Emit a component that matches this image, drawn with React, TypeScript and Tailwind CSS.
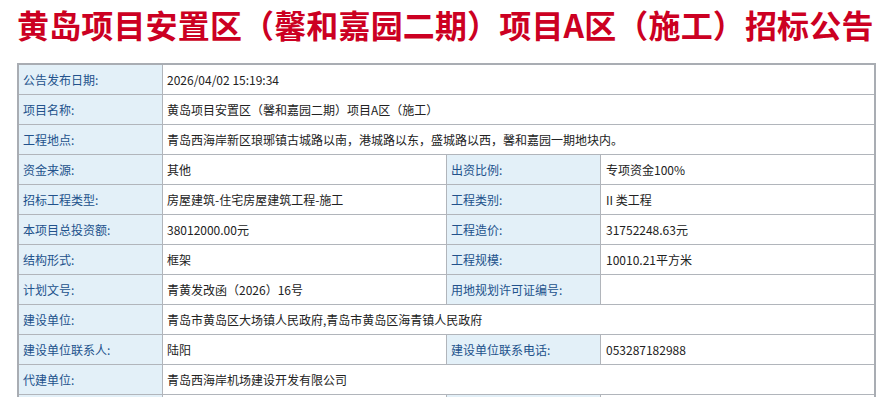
import React from 'react';

const font = { fontFamily: '"Noto Sans CJK SC", "Noto Sans", sans-serif' };

interface Cell {
  label: string;
  value: string;
}

type Row = Cell | [Cell, Cell];

const rows: Row[] = [
  { label: '公告发布日期:', value: '2026/04/02 15:19:34' },
  { label: '项目名称:', value: '黄岛项目安置区（馨和嘉园二期）项目A区（施工）' },
  { label: '工程地点:', value: '青岛西海岸新区琅琊镇古城路以南，港城路以东，盛城路以西，馨和嘉园一期地块内。' },
  [
    { label: '资金来源:', value: '其他' },
    { label: '出资比例:', value: '专项资金100%' },
  ],
  [
    { label: '招标工程类型:', value: '房屋建筑-住宅房屋建筑工程-施工' },
    { label: '工程类别:', value: 'II 类工程' },
  ],
  [
    { label: '本项目总投资额:', value: '38012000.00元' },
    { label: '工程造价:', value: '31752248.63元' },
  ],
  [
    { label: '结构形式:', value: '框架' },
    { label: '工程规模:', value: '10010.21平方米' },
  ],
  [
    { label: '计划文号:', value: '青黄发改函（2026）16号' },
    { label: '用地规划许可证编号:', value: '' },
  ],
  { label: '建设单位:', value: '青岛市黄岛区大场镇人民政府,青岛市黄岛区海青镇人民政府' },
  [
    { label: '建设单位联系人:', value: '陆阳' },
    { label: '建设单位联系电话:', value: '053287182988' },
  ],
  { label: '代建单位:', value: '青岛西海岸机场建设开发有限公司' },
  // next row only peeks in at the bottom edge
  [
    { label: '', value: '' },
    { label: '', value: '' },
  ],
];

const Label: React.FC<{ text: string; className: string }> = ({ text, className }) => (
  <div className={`flex items-center bg-[#e3f0f8] text-[#22528c] border-r border-[#b1b5bb] ${className}`}>
    {text}
  </div>
);

export default function App() {
  return (
    <div className="bg-white w-[886px] h-[397px] overflow-hidden" style={font}>
      <h1 className="pl-[17px] text-[32px] leading-[48px] font-bold text-[#cc0022] whitespace-nowrap tracking-[0.15px]">
        黄岛项目安置区（馨和嘉园二期）项目A区（施工）招标公告
      </h1>
      <div className="ml-[17px] mt-[15px] w-[859px] border-2 border-[#a9adb3] text-[12px]">
        {rows.map((row, i) => (
          <div key={i} className="flex h-[30px] border-b border-[#b1b5bb]">
            {Array.isArray(row) ? (
              <>
                <Label text={row[0].label} className="w-[144px] pl-[4px]" />
                <div className="flex items-center w-[284px] pl-[4px] border-r border-[#b1b5bb] text-[#222]">
                  {row[0].value}
                </div>
                <Label text={row[1].label} className="w-[154px] pl-[4px]" />
                <div className="flex items-center flex-1 pl-[5px] text-[#222]">{row[1].value}</div>
              </>
            ) : (
              <>
                <Label text={row.label} className="w-[144px] pl-[4px]" />
                <div className="flex items-center flex-1 pl-[4px] text-[#222] whitespace-nowrap">{row.value}</div>
              </>
            )}
          </div>
        ))}
      </div>
    </div>
  );
}
